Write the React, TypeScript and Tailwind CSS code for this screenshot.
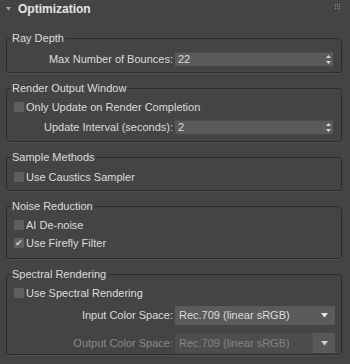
import type { ReactNode } from "react";

// petit triangle vers le bas pour les listes déroulantes
function DropArrow({ dim }: { dim?: boolean }) {
  return (
    <svg width="7" height="5" viewBox="0 0 7 5" className="block">
      <path d="M0 0H7L3.5 4.5Z" fill={dim ? "#d0d0d0" : "#e6e6e6"} />
    </svg>
  );
}

function SpinArrows() {
  return (
    <svg width="5" height="9" viewBox="0 0 5 9" className="block">
      <path d="M2.5 0L5 3H0Z" fill="#d8d8d8" />
      <path d="M0 6H5L2.5 9Z" fill="#d8d8d8" />
    </svg>
  );
}

function Group({ title, children, className }: { title: string; children: ReactNode; className?: string }) {
  return (
    <fieldset className="border border-[#2d2d2d] rounded-[3px] shadow-[0_1px_0_#505050]">
      <legend className="ml-[4px] px-[1px] leading-[14px] text-[11px] text-[#dcdcdc]">{title}</legend>
      <div className={`pr-[8px] flex flex-col ${className ?? ""}`}>{children}</div>
    </fieldset>
  );
}

function Check({ label, checked }: { label: string; checked?: boolean }) {
  return (
    <div className="flex h-[16px] items-center pl-[7px] gap-[2px]">
      <div className="w-[10px] h-[10px] bg-[#5e5e5e] flex items-center justify-center text-[9px] leading-none text-[#cfcfcf]">
        {checked ? "✔" : ""}
      </div>
      <span>{label}</span>
    </div>
  );
}

function Spinner({ label, value, className }: { label: string; value: string; className?: string }) {
  return (
    <div className={`flex h-[14px] items-center gap-[2px] ${className ?? ""}`}>
      <span className="w-[166px] text-right">{label}</span>
      <div className="flex-1 h-full bg-[#5a5a5a] border-t border-[#4e4e4e] flex items-center pl-[3px] pr-[2px]">
        <span className="flex-1 leading-none">{value}</span>
        <SpinArrows />
      </div>
    </div>
  );
}

function Dropdown({ label, value, disabled, className }: { label: string; value: string; disabled?: boolean; className?: string }) {
  return (
    <div className={`flex items-center gap-[2px] pr-[-2px] ${className ?? ""}`}>
      <span className={`w-[166px] text-right ${disabled ? "text-[#8a8a8a]" : ""}`}>{label}</span>
      <div
        className={`flex-1 h-full flex items-center mr-[-2px] ${disabled ? "bg-[#4d4d4d] text-[#858585]" : "bg-[#5b5b5b]"}`}
      >
        <span className="flex-1 pl-[4px]">{value}</span>
        <div className={`w-[22px] h-full flex items-center justify-center ${disabled ? "bg-[#585858]" : ""}`}>
          <DropArrow dim={disabled} />
        </div>
      </div>
    </div>
  );
}

export default function App() {
  return (
    <div className="w-[350px] h-[364px] overflow-hidden bg-[#444444] text-[#dcdcdc] text-[11px] font-['Liberation_Sans',Arial,sans-serif]">
      {/* Entête du rollout */}
      <div className="flex h-[18px] items-center pl-[6px] pr-[8px]">
        <svg width="5" height="4" viewBox="0 0 5 4" className="block">
          <path d="M0 0H5L2.5 3.5Z" fill="#a8a8a8" />
        </svg>
        <span className="ml-[7px] text-[12px] font-bold text-[#e4e4e4]">Optimization</span>
        <svg width="6" height="6" viewBox="0 0 6 6" className="ml-auto mr-[1px] mt-[-4px] block">
          {[0, 2, 4].map((x) =>
            [0, 2, 4].map((y) => <rect key={`${x}-${y}`} x={x} y={y} width="1" height="1" fill="#8a8a8a" />)
          )}
        </svg>
      </div>

      <div className="flex flex-col gap-[8px] pt-[13px] pl-[6px] pr-[8px]">
        <Group title="Ray Depth" className="pt-[7px] pb-[6px]">
          <Spinner label="Max Number of Bounces:" value="22" />
        </Group>

        <Group title="Render Output Window" className="pt-[4px] pb-[7px]">
          <Check label="Only Update on Render Completion" />
          <Spinner label="Update Interval (seconds):" value="2" className="mt-[5px]" />
        </Group>

        <Group title="Sample Methods" className="pt-[5px] pb-[5px]">
          <Check label="Use Caustics Sampler" />
        </Group>

        <Group title="Noise Reduction" className="pt-[4px] pb-[7px] gap-[2px]">
          <Check label="AI De-noise" />
          <Check label="Use Firefly Filter" checked />
        </Group>

        <Group title="Spectral Rendering" className="pt-[4px] pb-[1px]">
          <Check label="Use Spectral Rendering" />
          <Dropdown label="Input Color Space:" value="Rec.709 (linear sRGB)" className="mt-[5px] h-[19px]" />
          <Dropdown label="Output Color Space:" value="Rec.709 (linear sRGB)" disabled className="mt-[8px] h-[20px]" />
        </Group>
      </div>
    </div>
  );
}
